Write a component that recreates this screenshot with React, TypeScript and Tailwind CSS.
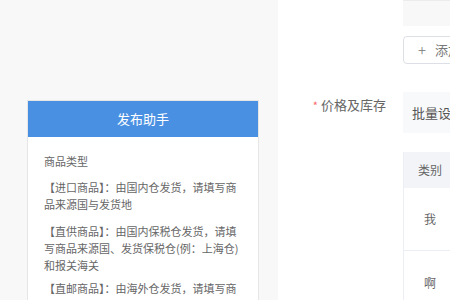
import React from "react";

const font = { fontFamily: '"Noto Sans CJK SC", "Noto Sans", sans-serif' };

export default function App() {
  return (
    <div className="flex h-[300px] w-[450px] overflow-hidden bg-white" style={font}>
      <div className="w-[278px] shrink-0 bg-[#f8f8f8] pl-[27px] pt-[100px]">
        <div className="w-[232px] border border-[#e6e6e6] bg-white">
          <div className="flex h-[36px] items-center justify-center bg-[#4a90e2] text-[13px] text-white">
            发布助手
          </div>
          <div className="pl-[16px] pr-[14px] pt-[16px] text-[11px] leading-[17px] text-[#666]">
            <p>商品类型</p>
            <p className="mt-[9px]">【进口商品】：由国内仓发货，请填写商品来源国与发货地</p>
            <p className="mt-[10px]">【直供商品】：由国内保税仓发货，请填写商品来源国、发货保税仓(例：上海仓)和报关海关</p>
            <p className="mt-[6px]">【直邮商品】：由海外仓发货，请填写商品来源国与发货地</p>
          </div>
        </div>
      </div>
      <div className="flex-1 pl-[125px]">
        <div className="h-[26px] border-t border-[#ececec] bg-[#f8f8f8]" />
        <div className="mt-[10px] flex h-[28px] w-[90px] items-center rounded-[4px] border border-[#dcdfe6] bg-white pl-[14px] text-[13px] text-[#777]">
          <span className="mr-[9px] text-[15px] font-light">+</span>
          <span>添加</span>
        </div>
        <div className="relative mt-[28px]">
          <div className="absolute right-full top-[3px] mr-[17px] flex items-center whitespace-nowrap text-[13px] text-[#666]">
            <span className="mr-[3px] text-[11px] text-[#f56c6c]">*</span>
            <span>价格及库存</span>
          </div>
          <div className="flex h-[41px] items-center bg-[#f8f9fa] pl-[9px] text-[13px] text-[#555] whitespace-nowrap">
            批量设置
          </div>
        </div>
        <div className="mt-[19px] border-l border-[#ebeef5]">
          <div className="flex h-[36px] w-[52px] items-center justify-center bg-[#f2f4f7] text-[12px] text-[#666]">
            类别
          </div>
          <div className="flex h-[63px] w-[52px] items-center justify-center border-b border-[#ebeef5] text-[12px] text-[#666]">
            我
          </div>
          <div className="flex h-[63px] w-[52px] items-center justify-center text-[12px] text-[#666]">
            啊
          </div>
        </div>
      </div>
    </div>
  );
}
